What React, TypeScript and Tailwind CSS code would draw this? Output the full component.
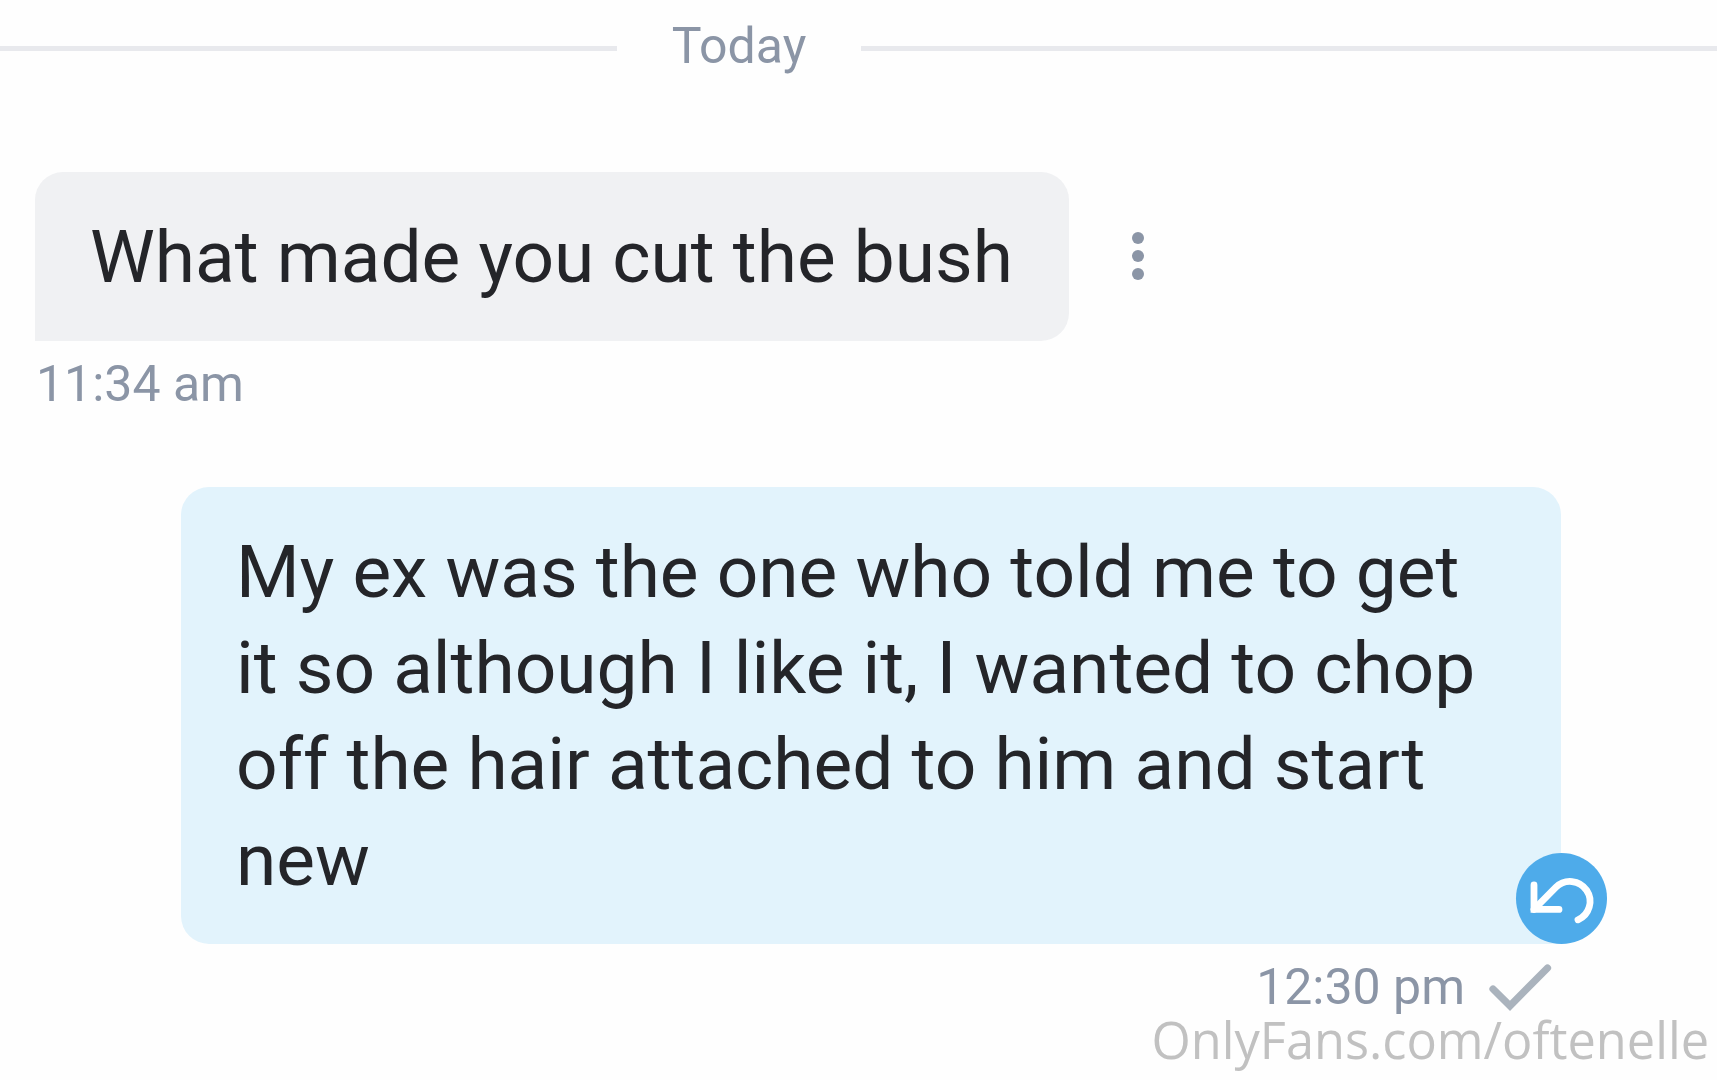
import type { ReactNode } from "react";

function DayDivider({ label }: { label: string }) {
  return (
    <div className="flex h-24 items-center text-[50px]">
      <div className="h-[5px] w-[617px] bg-[#e8e9ed]" />
      <div className="w-[244px] pb-[5px] text-center leading-none">{label}</div>
      <div className="h-[5px] flex-1 bg-[#e8e9ed]" />
    </div>
  );
}

function Bubble({ className, children }: { className: string; children: ReactNode }) {
  return (
    <div className={`pt-[37px] text-[73px] leading-[96px] whitespace-nowrap text-[#242529] ${className}`}>
      {children}
    </div>
  );
}

function UndoIcon() {
  return (
    <svg viewBox="0 0 91 91" className="size-full" fill="none" stroke="#fff" strokeWidth="6.8" strokeLinecap="round">
      <path d="M18 32V56.4H43" />
      <path d="M18 56.4L40 34.2A20 20 0 1 1 62 66.8" />
    </svg>
  );
}

function CheckIcon() {
  return (
    <svg viewBox="0 0 64 50" className="h-[50px] w-16" fill="none" stroke="#aab3bd" strokeWidth="7.2">
      <path d="M5 26L22 42.8L59.5 5" strokeLinecap="round" />
    </svg>
  );
}

export default function App() {
  return (
    <div className="h-[1080px] w-[1717px] overflow-hidden bg-[#fefefe] font-[Roboto,sans-serif] text-[#8b95a6]">
      <DayDivider label="Today" />

      {/* Received message */}
      <div className="mt-[76px] ml-[35px] flex items-center">
        <Bubble className="h-[169px] w-[1034px] rounded-[28px] rounded-bl-none bg-[#f0f1f3] pl-[55px]">
          What made you cut the bush
        </Bubble>
        <button type="button" aria-label="More" className="ml-[63px] flex flex-col gap-[6px] pb-[2px]">
          <span className="size-3 rounded-full bg-[#8b95a6]" />
          <span className="size-3 rounded-full bg-[#8b95a6]" />
          <span className="size-3 rounded-full bg-[#8b95a6]" />
        </button>
      </div>
      <div className="mt-3 ml-[36px] text-[50px] leading-[62px]">11:34 am</div>

      {/* Sent message */}
      <div className="relative mt-[72px] ml-[181px] w-[1380px]">
        <Bubble className="h-[457px] rounded-[28px] rounded-br-none bg-[#e2f3fc] pl-[55px]">
          <div>My ex was the one who told me to get</div>
          <div>it so although I like it, I wanted to chop</div>
          <div>off the hair attached to him and start</div>
          <div>new</div>
        </Bubble>
        <button type="button" aria-label="Undo" className="absolute -right-[46px] bottom-0 size-[91px] rounded-full bg-[#4eabea]">
          <UndoIcon />
        </button>
      </div>
      <div className="mr-[165px] flex h-[70px] items-start justify-end gap-[23px] pt-[19px]">
        <span className="mt-[-2px] text-[50px] leading-[52px]">12:30 pm</span>
        <CheckIcon />
      </div>
      <div className="mr-[8px] text-right font-['Open_Sans',sans-serif] text-[50.5px] leading-[51px] text-[#c1c1c1]">
        OnlyFans.com/oftenelle
      </div>
    </div>
  );
}
